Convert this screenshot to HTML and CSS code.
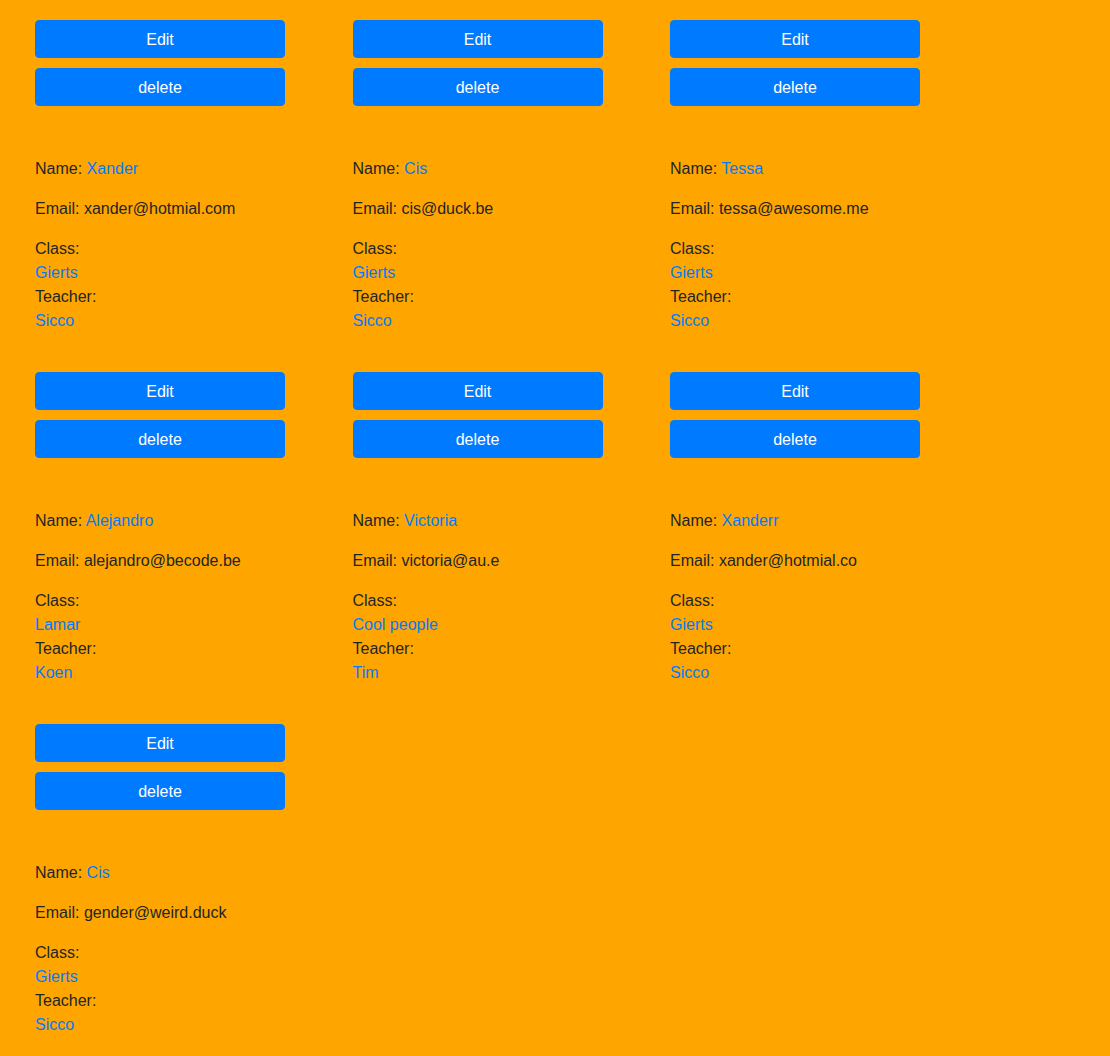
FILE: index.html
```html
<!DOCTYPE html>
<html lang="en">
<head>
<meta charset="utf-8">
<title>Students</title>
<link rel="stylesheet" href="styles.css">
</head>
<body>
<div class="grid">
  <div class="card">
    <div class="actions"><button class="btn">Edit</button><button class="btn">delete</button></div>
    <p>Name: <span class="val">Xander</span></p>
    <p>Email: xander@hotmial.com</p>
    <p>Class:<br><span class="val">Gierts</span><br>Teacher:<br><span class="val">Sicco</span></p>
  </div>
  <div class="card">
    <div class="actions"><button class="btn">Edit</button><button class="btn">delete</button></div>
    <p>Name: <span class="val">Cis</span></p>
    <p>Email: cis@duck.be</p>
    <p>Class:<br><span class="val">Gierts</span><br>Teacher:<br><span class="val">Sicco</span></p>
  </div>
  <div class="card">
    <div class="actions"><button class="btn">Edit</button><button class="btn">delete</button></div>
    <p>Name: <span class="val">Tessa</span></p>
    <p>Email: tessa@awesome.me</p>
    <p>Class:<br><span class="val">Gierts</span><br>Teacher:<br><span class="val">Sicco</span></p>
  </div>
  <div class="card">
    <div class="actions"><button class="btn">Edit</button><button class="btn">delete</button></div>
    <p>Name: <span class="val">Alejandro</span></p>
    <p>Email: alejandro@becode.be</p>
    <p>Class:<br><span class="val">Lamar</span><br>Teacher:<br><span class="val">Koen</span></p>
  </div>
  <div class="card">
    <div class="actions"><button class="btn">Edit</button><button class="btn">delete</button></div>
    <p>Name: <span class="val">Victoria</span></p>
    <p>Email: victoria@au.e</p>
    <p>Class:<br><span class="val">Cool people</span><br>Teacher:<br><span class="val">Tim</span></p>
  </div>
  <div class="card">
    <div class="actions"><button class="btn">Edit</button><button class="btn">delete</button></div>
    <p>Name: <span class="val">Xanderr</span></p>
    <p>Email: xander@hotmial.co</p>
    <p>Class:<br><span class="val">Gierts</span><br>Teacher:<br><span class="val">Sicco</span></p>
  </div>
  <div class="card">
    <div class="actions"><button class="btn">Edit</button><button class="btn">delete</button></div>
    <p>Name: <span class="val">Cis</span></p>
    <p>Email: gender@weird.duck</p>
    <p>Class:<br><span class="val">Gierts</span><br>Teacher:<br><span class="val">Sicco</span></p>
  </div>
</div>
</body>
</html>
```
FILE: styles.css
```css
html, body {
  margin: 0;
  padding: 0;
  background: #ffa500;
}
body {
  font-family: "Liberation Sans", Arial, sans-serif;
  font-size: 16px;
  line-height: 24px;
  color: #212529;
}
.grid {
  display: grid;
  grid-template-columns: repeat(3, 317.5px);
  row-gap: 24px;
  padding: 20px 0 0 35px;
}
.card {
  display: flex;
  flex-direction: column;
}
.actions {
  display: flex;
  flex-direction: column;
  gap: 10px;
  margin-bottom: 51px;
}
.btn {
  box-sizing: border-box;
  width: 250px;
  height: 38px;
  padding: 2px 0 0;
  border: 1px solid #007bff;
  border-radius: 4px;
  background: #007bff;
  color: #fff;
  font-family: "Liberation Sans", Arial, sans-serif;
  font-size: 16px;
  line-height: 24px;
  cursor: pointer;
}
.card p {
  margin: 0 0 16px;
}
.card p:last-child {
  margin-bottom: 15px;
}
.val {
  color: #007bff;
}
```
